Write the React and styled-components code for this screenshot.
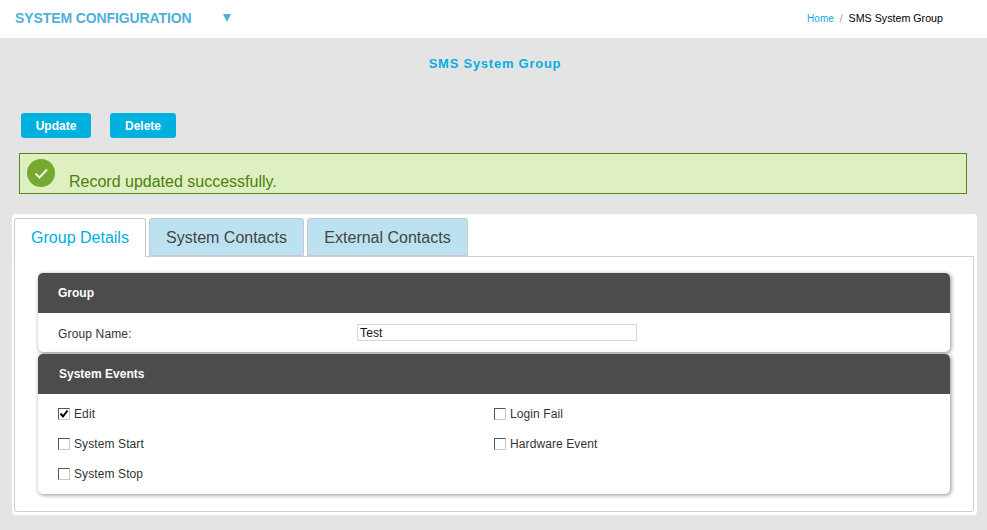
import styled, { createGlobalStyle } from "styled-components";

const GlobalStyle = createGlobalStyle`
  html, body {
    margin: 0;
    padding: 0;
    background: #e4e4e4;
    font-family: "Liberation Sans", Arial, sans-serif;
  }
`;

const Page = styled.div`
  width: 987px;
  height: 530px;
  overflow: hidden;
  background: #e4e4e4;
`;

const TopBar = styled.header`
  height: 38px;
  background: #fff;
  display: flex;
  align-items: center;
  justify-content: space-between;
  padding: 0 44px 2px 15px;
  box-sizing: border-box;
`;

const MenuTitle = styled.div`
  display: flex;
  align-items: center;
  gap: 31px;
  font-size: 14px;
  font-weight: bold;
  color: #4fb0d8;
  letter-spacing: -0.1px;
`;

const Caret = styled.span`
  width: 0;
  height: 0;
  border-left: 4px solid transparent;
  border-right: 4px solid transparent;
  border-top: 8px solid #4fb0d8;
`;

const Crumbs = styled.nav`
  font-size: 10px;
  color: #000;
  display: flex;
  align-items: baseline;
  gap: 6px;
`;

const CrumbLink = styled.a`
  color: #14a8ea;
`;

const CrumbSep = styled.span`
  color: #999;
`;

const CrumbCurrent = styled.span`
  font-size: 10.7px;
`;

const PageTitle = styled.h1`
  margin: 0;
  height: 75px;
  padding: 18px 0 0 3px;
  box-sizing: border-box;
  text-align: center;
  font-size: 13px;
  line-height: 16px;
  letter-spacing: 0.75px;
  font-weight: bold;
  color: #08aee0;
`;

const Actions = styled.div`
  display: flex;
  gap: 19px;
  padding-left: 21px;
`;

const ActionButton = styled.button`
  width: ${(p) => p.$width}px;
  height: 25px;
  padding: 0;
  border: none;
  border-radius: 3px;
  background: #00b0de;
  color: #fff;
  font-family: inherit;
  font-size: 12px;
  font-weight: bold;
`;

const Alert = styled.div`
  margin: 15px 20px 0 19px;
  height: 41px;
  box-sizing: border-box;
  border: 1px solid #55891c;
  background: #dff0c0;
  display: flex;
  padding: 5px 0 0 7px;
  gap: 14px;
`;

const AlertIcon = styled.svg`
  width: 28px;
  height: 28px;
  flex: none;
`;

const AlertText = styled.span`
  font-size: 16px;
  line-height: 18px;
  margin-top: 14px;
  color: #4c7f0e;
`;

const Card = styled.section`
  margin: 20px 10px 0 12px;
  height: 301px;
  box-sizing: border-box;
  background: #fff;
  border-radius: 4px;
  padding: 4px 3px 3px 2px;
`;

const TabRow = styled.div`
  display: flex;
  gap: 3px;
  height: 39px;
  position: relative;
  z-index: 1;
`;

const Tab = styled.div`
  width: ${(p) => p.$width}px;
  height: ${(p) => (p.$active ? 39 : 38)}px;
  box-sizing: border-box;
  border: 1px solid #c8c8c8;
  border-bottom: ${(p) => (p.$active ? "none" : "1px solid #c8c8c8")};
  border-radius: 3px 3px 0 0;
  background: ${(p) => (p.$active ? "#fff" : "#bce2f2")};
  color: ${(p) => (p.$active ? "#00aee6" : "#444")};
  font-size: 16px;
  line-height: 37px;
  text-align: center;
`;

const TabBody = styled.div`
  height: 256px;
  margin-top: -1px;
  box-sizing: border-box;
  border: 1px solid #cfcfcf;
  border-radius: 0 0 3px 3px;
  padding: 16px 23px 0 23px;
  display: flex;
  flex-direction: column;
  gap: 2px;
`;

const Panel = styled.div`
  background: #fff;
  border-radius: 5px;
  box-shadow: 1px 1px 4px rgba(0, 0, 0, 0.45);
  overflow: hidden;
  flex: none;
`;

const PanelHead = styled.div`
  height: 40px;
  background: #4c4c4c;
  color: #fff;
  font-size: 12px;
  font-weight: bold;
  line-height: 40px;
  padding-left: ${(p) => p.$indent}px;
`;

const FieldRow = styled.div`
  height: 39px;
  display: flex;
  align-items: center;
  padding-left: 20px;
  box-sizing: border-box;
  font-size: 12px;
  letter-spacing: 0.15px;
  color: #333;
`;

const FieldLabel = styled.label`
  width: 299px;
  margin-top: 2px;
`;

const TextInput = styled.div`
  width: 280px;
  height: 17px;
  box-sizing: border-box;
  border: 1px solid #d6d6e6;
  padding: 1px 0 0 2px;
  font-size: 12px;
  line-height: 15px;
  color: #111;
`;

const EventGrid = styled.div`
  height: 100px;
  box-sizing: border-box;
  padding: 5px 0 0 20px;
  display: grid;
  grid-template-columns: 436px 1fr;
  grid-auto-rows: 30px;
`;

const EventItem = styled.div`
  display: flex;
  align-items: center;
  gap: 4px;
  font-size: 12px;
  letter-spacing: 0.1px;
  color: #333;
`;

const Box = styled.span`
  width: 12px;
  height: 12px;
  flex: none;
  box-sizing: border-box;
  border: 1px solid;
  border-color: #555 #c8c8c8 #c8c8c8 #555;
  background: #fff;
  display: flex;
  align-items: center;
  justify-content: center;
`;

const CheckBox = ({ checked }) => (
  <Box>
    {checked && (
      <svg width="10" height="10" viewBox="0 0 10 10">
        <path d="M1.5 4.5 L4 7.5 L8.5 1.5" fill="none" stroke="#000" strokeWidth="2" />
      </svg>
    )}
  </Box>
);

const App = () => {
  return (
    <Page>
      <GlobalStyle />
      <TopBar>
        <MenuTitle>
          SYSTEM CONFIGURATION
          <Caret />
        </MenuTitle>
        <Crumbs>
          <CrumbLink>Home</CrumbLink>
          <CrumbSep>/</CrumbSep>
          <CrumbCurrent>SMS System Group</CrumbCurrent>
        </Crumbs>
      </TopBar>
      <PageTitle>SMS System Group</PageTitle>
      <Actions>
        <ActionButton $width={70}>Update</ActionButton>
        <ActionButton $width={66}>Delete</ActionButton>
      </Actions>
      <Alert>
        <AlertIcon viewBox="0 0 28 28">
          <circle cx="14" cy="14" r="14" fill="#75a92f" />
          <path d="M8.5 14.5 L12.5 18.5 L20 10.5" fill="none" stroke="#eef5e2" strokeWidth="2" />
        </AlertIcon>
        <AlertText>Record updated successfully.</AlertText>
      </Alert>
      <Card>
        <TabRow>
          <Tab $width={132} $active>Group Details</Tab>
          <Tab $width={155}>System Contacts</Tab>
          <Tab $width={161}>External Contacts</Tab>
        </TabRow>
        <TabBody>
          <Panel>
            <PanelHead $indent={20}>Group</PanelHead>
            <FieldRow>
              <FieldLabel>Group Name:</FieldLabel>
              <TextInput>Test</TextInput>
            </FieldRow>
          </Panel>
          <Panel>
            <PanelHead $indent={21}>System Events</PanelHead>
            <EventGrid>
              <EventItem><CheckBox checked />Edit</EventItem>
              <EventItem><CheckBox />Login Fail</EventItem>
              <EventItem><CheckBox />System Start</EventItem>
              <EventItem><CheckBox />Hardware Event</EventItem>
              <EventItem><CheckBox />System Stop</EventItem>
            </EventGrid>
          </Panel>
        </TabBody>
      </Card>
    </Page>
  );
};

export default App;
